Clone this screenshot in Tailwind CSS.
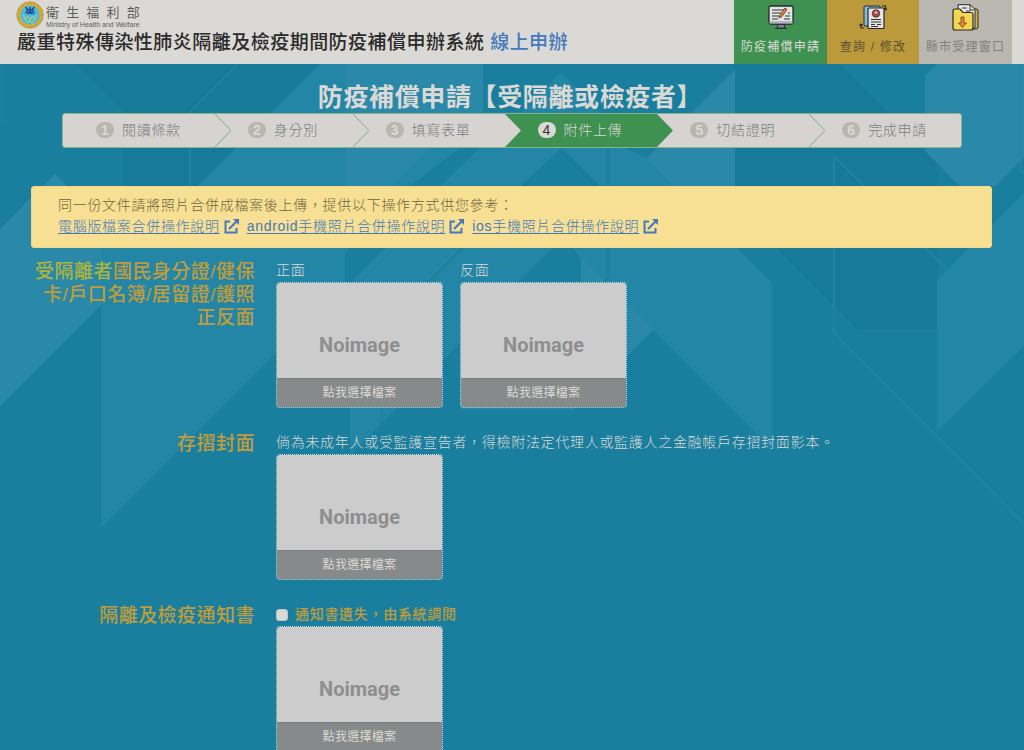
<!DOCTYPE html>
<html lang="zh-Hant">
<head>
<meta charset="utf-8">
<meta name="viewport" content="width=device-width, initial-scale=1">
<title>防疫補償申請</title>
<script src="https://cdn.jsdelivr.net/npm/@tailwindcss/browser@4"></script>
</head>
<body class="min-h-screen bg-[#1a7f9e] font-['Liberation_Sans','Noto_Sans_CJK_TC',sans-serif] text-sm font-light tracking-wider text-[#dbd9d5]">

<header class="flex h-16 justify-between bg-[#dbd9d5] pr-3">
  <div class="pl-[17px]">
    <a href="#" class="-ml-px flex h-[29px] items-center gap-[2px] text-[#5c5e60]">
      <svg class="size-7" viewBox="0 0 28 28" aria-hidden="true">
        <circle cx="14" cy="14" r="13.2" fill="#dfae2b" stroke="#a8935b" stroke-width=".8"/>
        <circle cx="14" cy="14" r="11.5" fill="none" stroke="#8d7840" stroke-width="1.3" stroke-dasharray="1 1.6" opacity=".45"/>
        <circle cx="14" cy="14" r="9.8" fill="#4db8dc"/>
        <path d="M9.500 6l2 2.500-1.500 4M18.500 6l-2 2.500 1.500 4M11.500 8l2.500 2 2.500-2M14 6v7M11.500 13l2.500-3 2.500 3" fill="none" stroke="#1d4f91" stroke-width="1.600"/>
        <path d="M6.500 13l3 5 2-3 2.500 4 2.500-4 2 3 3-5M8 17l4 5 2-3 2 3 4-5" fill="none" stroke="#b9cf72" stroke-width="1"/>
      </svg>
      <span class="flex flex-col pt-1">
        <span class="flex justify-between text-[13px] leading-4 font-normal tracking-normal"><span>衛</span><span>生</span><span>福</span><span>利</span><span>部</span></span>
        <span class="text-[7px] leading-[7px] font-normal tracking-normal">Ministry of Health and Welfare</span>
      </span>
    </a>
    <p class="text-[19px] leading-7 font-medium tracking-wide whitespace-nowrap text-[#2b2b2b]">嚴重特殊傳染性肺炎隔離及檢疫期間防疫補償申辦系統 <a href="#" class="text-[#4479bd]">線上申辦</a></p>
  </div>
  <nav class="flex text-xs font-normal tracking-widest">
    <a href="#" class="flex w-[93px] flex-col items-center gap-[5px] bg-[#3e9150] pt-1 whitespace-nowrap">
      <svg class="h-[26px] w-7" viewBox="0 0 28 26" aria-hidden="true">
        <path d="M11 20h6l1 4h-8z" fill="#7d8790" stroke="#26292d"/>
        <rect x="2" y="2" width="24" height="18" rx="1.500" fill="#e4e4e2" stroke="#26292d" stroke-width="1.300"/>
        <path d="M2.600 17h22.800v2.500H2.600z" fill="#aeb7be"/>
        <path d="M5 6h12M5 9h9M5 12h7M5 15h6M18 12h5M17 15h6M21 9h2M8 24.500h12" stroke="#303236" stroke-width="1.200"/>
        <path d="M12 14l1-3 5-7 2 1.500-5 7z" fill="#e48735" stroke="#51352a" stroke-width=".8"/>
        <path d="M17 5l2-1 1 1.500-1 1z" fill="#ca5140"/>
      </svg>
      <span class="leading-6">防疫補償申請</span>
    </a>
    <a href="#" class="flex w-[92px] flex-col items-center gap-[5px] bg-[#bc9a3b] pt-1 whitespace-nowrap text-[#5b5033]">
      <svg class="h-[26px] w-7" viewBox="0 0 28 26" aria-hidden="true">
        <rect x="5" y="2" width="16" height="20" rx="1" fill="#83bddb" stroke="#26292d"/>
        <rect x="9" y="4" width="16" height="20.500" rx="1" fill="#e4e4e2" stroke="#26292d" stroke-width="1.200"/>
        <circle cx="17" cy="9.500" r="3.700" fill="#c44742" stroke="#26292d" stroke-width=".8"/>
        <circle cx="17" cy="8.500" r="1.300" fill="#edc69a"/><path d="M15 12q2-3 4 0" fill="#3f6286"/>
        <path d="M12 15.500h10M12 18h10M12 20.500h4M18 20.500h4M12 22.500h7" stroke="#303236" stroke-width="1.100"/>
        <path d="M23 2h3.500v4M25 4.500l1.500 1.500L28 4.500M5 24H2v-4M.5 21.500L2 20l1.500 1.500" fill="none" stroke="#26292d" stroke-width="1.200"/>
      </svg>
      <span class="leading-6">查詢 / 修改</span>
    </a>
    <a href="#" class="flex w-[93px] flex-col items-center gap-1 bg-[#bab7b0] pt-1 whitespace-nowrap text-[#827e79]">
      <svg class="h-[27px] w-7" viewBox="0 0 28 27" aria-hidden="true">
        <path d="M18 5h6q2 0 2 2v16q0 2-2 2h-3z" fill="#d8b73d" stroke="#26292d"/>
        <path d="M6 .7h12l5 4.500V24H7z" fill="#e8e8e4" stroke="#26292d"/>
        <path d="M18 1v5h4M10 4h5M14 7h4M20 10v12" fill="none" stroke="#303236"/>
        <path d="M1 7q0-2 2-2h5l3 3.500h8q2 0 2 2V24q0 2-2 2H3q-2 0-2-2z" fill="#f3d750" stroke="#26292d" stroke-width="1.200"/>
        <path d="M9 13h3v6h2.500l-4 4.500-4-4.500H9z" fill="#e18a34" stroke="#693b24" stroke-width=".8"/>
      </svg>
      <span class="leading-6">縣市受理窗口</span>
    </a>
  </nav>
</header>

<main class="relative isolate overflow-hidden pt-[17px] pb-8">
  <!-- Geometric backdrop -->
  <svg class="absolute inset-x-0 top-0 -z-10 h-[686px] w-full" viewBox="0 64 1024 686" preserveAspectRatio="none" aria-hidden="true">
    <path fill="#177a99" d="M0 64H320L190 194H123V112L75 64zM735 64H840L937 161V329H858L735 206z"/>
    <path fill="#1a7f9e" d="M0 64H75L123 112V200H0z"/>
    <path fill="#2486a6" d="M320 64H483V112L530 104 647 158 737 248 772 283V449L653 330 573 410H395L350 455V353H276L101 528V305L0 406V229L55 174 101 220 148 186H198z"/>
    <path fill="#2a88a9" d="M0 229L55 174 101 220V305L0 406zM354 64H483V148H430L392 186H346V64zM735 70V186H672L647 158 657 148zM925 76L937 64H1024V157L995 186H960L925 151z"/>
    <path fill="#1a7f9e" d="M483 64H735V70L647 158 600 112H483z"/>
    <path fill="#2486a6" d="M561 73L601 113H521z"/>
    <path fill="#2a88a9" d="M735 70V186H672L647 158zM581 258L653 330 620 363H581z"/>
    <path fill="#2486a6" d="M1024 193L937 280V432L1024 346z"/>
    <path fill="#1a7f9e" d="M460 148L410 186H440L480 148zM345 252L350 248H386L352 282H345zM518 282L553 248H573L581 258V282zM562 148L600 186H520zM443 360L460 343V410H395z"/>
    <path fill="none" stroke="#2486a6" stroke-width="1.500" d="M834 333V156L947 270M834 333L1024 524M238 64L190 112V186M2 64V123M1021 64V170L1024 173"/>
    <path fill="none" stroke="#1a7f9e" stroke-width="1.500" d="M608 130V278L604 282M530 180L428 282M382 408V430"/>
  </svg>

  <h1 class="pr-1 text-center text-[25px] leading-8 font-semibold tracking-wide">防疫補償申請【受隔離或檢疫者】</h1>

  <ol class="mx-[62px] grid h-[35px] grid-cols-[152fr_138fr_152fr_153fr_152fr_152fr] overflow-hidden rounded-[3px] border border-[#86b58b] bg-[#d7d3d0] leading-4 text-[#777d80]">
    <li class="relative flex items-center gap-2 pb-px pl-[33px] whitespace-nowrap">
      <span class="flex h-4 w-[18px] items-center justify-center rounded-full bg-[#b9b6ae] font-bold tracking-normal text-[#dbd9d5]">1</span>閱讀條款
      <svg class="absolute top-0 left-full h-full w-4" viewBox="0 0 16 33" preserveAspectRatio="none" aria-hidden="true"><path d="M0 0L16 16.500 0 33" fill="none" stroke="#74b083"/></svg>
    </li>
    <li class="relative flex items-center gap-2 pb-px pl-[33px] whitespace-nowrap">
      <span class="flex h-4 w-[18px] items-center justify-center rounded-full bg-[#b9b6ae] font-bold tracking-normal text-[#dbd9d5]">2</span>身分別
      <svg class="absolute top-0 left-full h-full w-4" viewBox="0 0 16 33" preserveAspectRatio="none" aria-hidden="true"><path d="M0 0L16 16.500 0 33" fill="none" stroke="#74b083"/></svg>
    </li>
    <li class="relative flex items-center gap-2 pb-px pl-[33px] whitespace-nowrap">
      <span class="flex h-4 w-[18px] items-center justify-center rounded-full bg-[#b9b6ae] font-bold tracking-normal text-[#dbd9d5]">3</span>填寫表單
      <svg class="absolute top-0 left-full z-10 h-full w-4" viewBox="0 0 16 33" preserveAspectRatio="none" aria-hidden="true"><path d="M0 0L16 16.500 0 33z" fill="#d7d3d0"/></svg>
    </li>
    <li aria-current="step" class="relative flex items-center gap-2 bg-[#3e9150] pb-px pl-[33px] whitespace-nowrap text-[#dbd9d5]">
      <span class="flex h-4 w-[18px] items-center justify-center rounded-full bg-[#dbd9d5] tracking-normal text-[#33383b]">4</span>附件上傳
      <svg class="absolute top-0 left-full h-full w-4" viewBox="0 0 16 33" preserveAspectRatio="none" aria-hidden="true"><path d="M0 0L16 16.500 0 33z" fill="#3e9150"/></svg>
    </li>
    <li class="relative flex items-center gap-2 pb-px pl-[33px] whitespace-nowrap">
      <span class="flex h-4 w-[18px] items-center justify-center rounded-full bg-[#b9b6ae] font-bold tracking-normal text-[#dbd9d5]">5</span>切結證明
      <svg class="absolute top-0 left-full h-full w-4" viewBox="0 0 16 33" preserveAspectRatio="none" aria-hidden="true"><path d="M0 0L16 16.500 0 33" fill="none" stroke="#74b083"/></svg>
    </li>
    <li class="flex items-center gap-2 pb-px pl-[33px] whitespace-nowrap">
      <span class="flex h-4 w-[18px] items-center justify-center rounded-full bg-[#b9b6ae] font-bold tracking-normal text-[#dbd9d5]">6</span>完成申請
    </li>
  </ol>

  <section class="mt-[38px] mr-8 ml-[31px] rounded-[3px] border border-[#f5d97e] bg-[#f7e093] px-[26px] pt-2 pb-[10px] leading-[21px] text-[#6f6540]">
    <p>同一份文件請將照片合併成檔案後上傳，提供以下操作方式供您參考：</p>
    <div class="flex flex-wrap gap-x-2 text-[#4479bd]">
      <a href="#" class="flex items-center gap-1"><span class="underline underline-offset-2">電腦版檔案合併操作說明</span>
        <svg class="size-[15px]" viewBox="0 0 15 15" fill="none" stroke="currentColor" stroke-width="2" aria-hidden="true"><path d="M6 2.500H1.500v11h11V9M5 10l8-8"/><path d="M9 0h6v6z" fill="currentColor" stroke="none"/></svg></a>
      <a href="#" class="flex items-center gap-1"><span class="underline underline-offset-2">android手機照片合併操作說明</span>
        <svg class="size-[15px]" viewBox="0 0 15 15" fill="none" stroke="currentColor" stroke-width="2" aria-hidden="true"><path d="M6 2.500H1.500v11h11V9M5 10l8-8"/><path d="M9 0h6v6z" fill="currentColor" stroke="none"/></svg></a>
      <a href="#" class="flex items-center gap-1"><span class="underline underline-offset-2">ios手機照片合併操作說明</span>
        <svg class="size-[15px]" viewBox="0 0 15 15" fill="none" stroke="currentColor" stroke-width="2" aria-hidden="true"><path d="M6 2.500H1.500v11h11V9M5 10l8-8"/><path d="M9 0h6v6z" fill="currentColor" stroke="none"/></svg></a>
    </div>
  </section>

  <form class="mt-3 grid grid-cols-[224px_1fr] gap-x-[21px] gap-y-6 pr-8 pl-[31px]">
    <h2 class="text-right text-[19px] leading-[23px] font-medium tracking-wide text-[#c09c3b]"><span class="text-[#adb43c]">受隔離者</span>國民身分證/健保卡/戶口名簿/居留證/護照正反面</h2>
    <div class="flex gap-[17px]">
      <div class="flex w-[167px] flex-col gap-px">
        <span class="leading-[21px]">正面</span>
        <button type="button" aria-label="正面 點我選擇檔案" class="flex h-[126px] flex-col overflow-hidden rounded-[4px] border border-dotted border-[#d5dddd] bg-[#cccccc] bg-clip-padding">
          <span class="flex w-full flex-1 items-center justify-center pt-7 font-[Roboto,sans-serif] text-xl font-bold tracking-normal text-[#8e8e8e]">Noimage</span>
          <span class="w-full border-t border-[#7b7e7e] bg-[#878a8a] text-xs leading-[28px] font-normal tracking-wide">點我選擇檔案</span>
        </button>
      </div>
      <div class="flex w-[167px] flex-col gap-px">
        <span class="leading-[21px]">反面</span>
        <button type="button" aria-label="反面 點我選擇檔案" class="flex h-[126px] flex-col overflow-hidden rounded-[4px] border border-dotted border-[#d5dddd] bg-[#cccccc] bg-clip-padding">
          <span class="flex w-full flex-1 items-center justify-center pt-7 font-[Roboto,sans-serif] text-xl font-bold tracking-normal text-[#8e8e8e]">Noimage</span>
          <span class="w-full border-t border-[#7b7e7e] bg-[#878a8a] text-xs leading-[28px] font-normal tracking-wide">點我選擇檔案</span>
        </button>
      </div>
    </div>

    <h2 class="text-right text-[19px] leading-[23px] font-medium tracking-wide text-[#c09c3b]">存摺封面</h2>
    <div class="flex flex-col gap-px">
      <p class="leading-[21px]">倘為未成年人或受監護宣告者，得檢附法定代理人或監護人之金融帳戶存摺封面影本。</p>
      <button type="button" class="flex h-[126px] w-[167px] flex-col overflow-hidden rounded-[4px] border border-dotted border-[#d5dddd] bg-[#cccccc] bg-clip-padding">
        <span class="flex w-full flex-1 items-center justify-center pt-7 font-[Roboto,sans-serif] text-xl font-bold tracking-normal text-[#8e8e8e]">Noimage</span>
        <span class="w-full border-t border-[#7b7e7e] bg-[#878a8a] text-xs leading-[28px] font-normal tracking-wide">點我選擇檔案</span>
      </button>
    </div>

    <h2 class="text-right text-[19px] leading-[23px] font-medium tracking-wide text-[#c09c3b]">隔離及檢疫通知書</h2>
    <div class="flex flex-col gap-px">
      <div class="flex items-center gap-[7px]">
        <input id="lost" type="checkbox" class="size-3 appearance-none rounded-[3px] border border-[#c4c3c0] bg-[#dbd9d5] checked:bg-[#4479bd]">
        <label for="lost" class="leading-[21px] font-medium text-[#c09c3b]">通知書遺失，由系統調閱</label>
      </div>
      <button type="button" class="flex h-[126px] w-[167px] flex-col overflow-hidden rounded-[4px] border border-dotted border-[#d5dddd] bg-[#cccccc] bg-clip-padding">
        <span class="flex w-full flex-1 items-center justify-center pt-7 font-[Roboto,sans-serif] text-xl font-bold tracking-normal text-[#8e8e8e]">Noimage</span>
        <span class="w-full border-t border-[#7b7e7e] bg-[#878a8a] text-xs leading-[28px] font-normal tracking-wide">點我選擇檔案</span>
      </button>
    </div>
  </form>
</main>
</body>
</html>
